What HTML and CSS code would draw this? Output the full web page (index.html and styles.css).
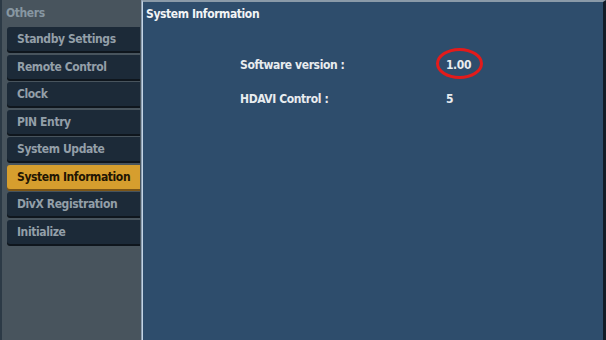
FILE: index.html
```html
<!DOCTYPE html>
<html lang="en">
<head>
    <meta charset="UTF-8">
    <title>System Information</title>
    <link rel="stylesheet" href="styles.css">
</head>
<body>

    <div class="screen">
        <!-- Left menu -->
        <div class="sidebar">
            <div class="group-title">Others</div>
            <div class="menu">
                <div class="menu-item">Standby Settings</div>
                <div class="menu-item">Remote Control</div>
                <div class="menu-item">Clock</div>
                <div class="menu-item">PIN Entry</div>
                <div class="menu-item">System Update</div>
                <div class="menu-item active">System Information</div>
                <div class="menu-item">DivX Registration</div>
                <div class="menu-item">Initialize</div>
            </div>
        </div>

        <!-- Info panel -->
        <div class="panel">
            <div class="panel-title">System Information</div>
            <div class="info">
                <div class="info-row">
                    <span class="label">Software version :</span>
                    <span class="value marked">1.00</span>
                </div>
                <div class="info-row">
                    <span class="label">HDAVI Control :</span>
                    <span class="value">5</span>
                </div>
            </div>
        </div>
    </div>

</body>
</html>
```

FILE: styles.css
```css
body {
    margin: 0;
    background: #1a2430;
    font-family: 'DejaVu Sans Condensed', 'DejaVu Sans', sans-serif;
    font-weight: bold;
    letter-spacing: -0.4px;
}

.screen {
    width: 606px;
    height: 340px;
    display: flex;
    background: #2c3a46;
}

.sidebar {
    width: 139px;
    margin-left: 2px;
    background: #48545d;
    border-right: 1px solid #8c9eb0;
    display: flex;
    flex-direction: column;
}

.group-title {
    color: #8797a2;
    font-size: 12px;
    padding: 6px 0 0 4px;
    height: 21px;
}

.menu {
    display: flex;
    flex-direction: column;
    gap: 3.5px;
    padding-left: 5px;
}

.menu-item {
    height: 24px;
    line-height: 25px;
    padding-left: 10px;
    background: #1c2a38;
    color: #939fa8;
    font-size: 12px;
    border-radius: 3px 0 0 3px;
    box-shadow: 0 2px 0 #0f161d;
    margin-right: 1px;
}

.menu-item.active {
    background: #d69e2e;
    color: #221503;
    box-shadow: 0 2px 0 #7a5518;
}

.panel {
    flex: 1;
    background: #2e4d6c;
    border-left: 1px solid #c4d4e4;
    border-top: 2px solid #8a9aa8;
    border-right: 3px solid #121c27;
    display: flex;
    flex-direction: column;
}

.panel-title {
    color: #f2f4f6;
    font-size: 12px;
    padding: 5px 0 0 3px;
}

.info {
    display: flex;
    flex-direction: column;
    gap: 20px;
    padding: 37px 0 0 97px;
}

.info-row {
    display: flex;
    color: #e8ecef;
    font-size: 12px;
}

.label {
    width: 206px;
}

.value {
    position: relative;
}

.marked::after {
    content: "";
    position: absolute;
    left: -10px;
    top: -10px;
    width: 41px;
    height: 25px;
    border: 3px solid #e31b1b;
    border-radius: 50%;
}
```
